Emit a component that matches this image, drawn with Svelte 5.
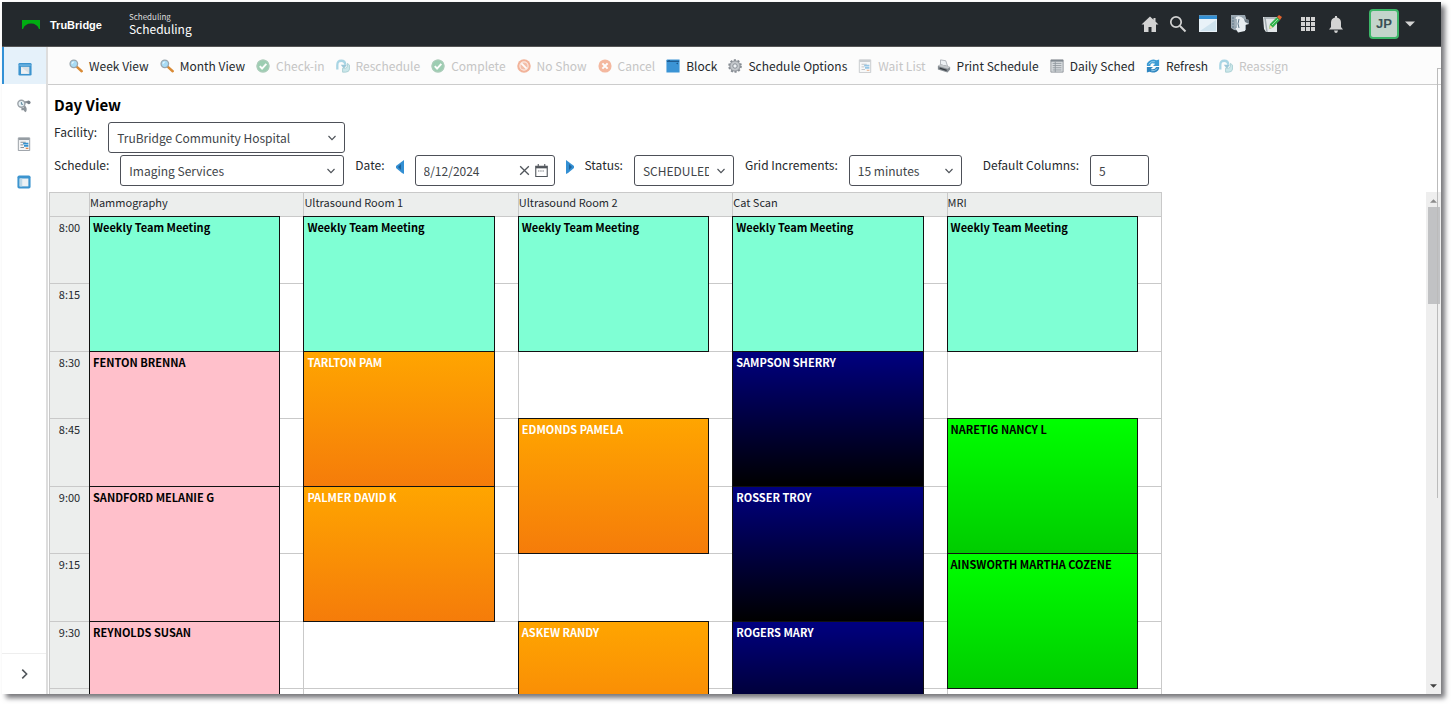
<script>
  const tools = [
    { label: "Week View", icon: "magnifier" },
    { label: "Month View", icon: "magnifier" },
    { label: "Check-in", icon: "check", disabled: true },
    { label: "Reschedule", icon: "redo", disabled: true },
    { label: "Complete", icon: "check", disabled: true },
    { label: "No Show", icon: "forbid", disabled: true },
    { label: "Cancel", icon: "cancel", disabled: true },
    { label: "Block", icon: "book" },
    { label: "Schedule Options", icon: "gear" },
    { label: "Wait List", icon: "form", disabled: true },
    { label: "Print Schedule", icon: "printer" },
    { label: "Daily Sched", icon: "list" },
    { label: "Refresh", icon: "refresh" },
    { label: "Reassign", icon: "redo", disabled: true },
  ];

  const sideItems = [
    { label: "Schedule", icon: "window" },
    { label: "Worklist", icon: "scope" },
    { label: "Reports", icon: "form" },
    { label: "Calendar", icon: "panel" },
  ];

  const slots = ["8:00", "8:15", "8:30", "8:45", "9:00", "9:15", "9:30", ""];
  // average height of a 15 minute row, rows alternate 67 / 68
  const slotHeight = 67.5;

  const meeting = { name: "Weekly Team Meeting", start: "8:00", span: 2, kind: "meeting" };

  const rooms = [
    {
      name: "Mammography",
      events: [
        meeting,
        { name: "FENTON BRENNA", start: "8:30", span: 2, kind: "pink" },
        { name: "SANDFORD MELANIE G", start: "9:00", span: 2, kind: "pink" },
        { name: "REYNOLDS SUSAN", start: "9:30", span: 2, kind: "pink" },
      ],
    },
    {
      name: "Ultrasound Room 1",
      events: [
        meeting,
        { name: "TARLTON PAM", start: "8:30", span: 2, kind: "orange" },
        { name: "PALMER DAVID K", start: "9:00", span: 2, kind: "orange" },
      ],
    },
    {
      name: "Ultrasound Room 2",
      events: [
        meeting,
        { name: "EDMONDS PAMELA", start: "8:45", span: 2, kind: "orange" },
        { name: "ASKEW RANDY", start: "9:30", span: 2, kind: "orange" },
      ],
    },
    {
      name: "Cat Scan",
      events: [
        meeting,
        { name: "SAMPSON SHERRY", start: "8:30", span: 2, kind: "navy" },
        { name: "ROSSER TROY", start: "9:00", span: 2, kind: "navy" },
        { name: "ROGERS MARY", start: "9:30", span: 2, kind: "navy" },
      ],
    },
    {
      name: "MRI",
      events: [
        meeting,
        { name: "NARETIG NANCY L", start: "8:45", span: 2, kind: "green" },
        { name: "AINSWORTH MARTHA COZENE", start: "9:15", span: 2, kind: "green" },
      ],
    },
  ];

  let date = $state("8/12/2024");
  let columns = $state("5");
</script>

{#snippet icon(name)}
  <svg class="icon" viewBox="0 0 16 16" aria-hidden="true">
    {#if name === "magnifier"}
      <path d="M9 9l5.500 5" stroke="#d98a35" stroke-width="2.800" stroke-linecap="round" />
      <circle cx="5.500" cy="5.500" r="4.300" fill="#a9dcf5" stroke="#9aa6ae" stroke-width="1.500" />
      <path d="M3.500 5.500a2 2 0 0 1 2-2" stroke="#fff" fill="none" />
    {:else if name === "check"}
      <circle cx="8" cy="8" r="7.500" fill="#41a06b" />
      <circle cx="8" cy="8" r="6.900" fill="none" stroke="#6d9a80" />
      <path d="M4.300 8.200l2.600 2.700 4.900-5.400" fill="none" stroke="#fff" stroke-width="2.200" />
    {:else if name === "redo"}
      <path d="M1.500 12V7Q1.500 2 6 2t4.500 4.500" fill="none" stroke="#58b0cd" stroke-width="2.600" />
      <path d="M5.500 6.500h7L9 11z" fill="#3c93b5" />
      <path d="M13 5l2.500 2v4.500Q15 15 11 15H7.500v-4.500H11Q13 10 13 8z" fill="#9bd3da" stroke="#55a1a9" />
    {:else if name === "forbid"}
      <circle cx="8" cy="8" r="7.700" fill="#ea6c3a" />
      <circle cx="8" cy="8" r="4.700" fill="#ee8259" stroke="#fbd9cb" stroke-width="1.300" />
      <path d="M5 5l6 6" stroke="#fff" stroke-width="2" />
    {:else if name === "cancel"}
      <circle cx="8" cy="8" r="7.500" fill="#ee7645" />
      <path d="M5 5l6 6M11 5l-6 6" stroke="#fff" stroke-width="2.400" />
    {:else if name === "book"}
      <path d="M.5 1.500Q.5.500 1.500.500h14v15H.500z" fill="#3b94d5" />
      <path d="M1 2.500h14M3.500 1v2" stroke="#174b7c" stroke-width="1.200" />
      <path d="M11.500 5.500l2-1.500v2z" fill="#174b7c" />
    {:else if name === "gear"}
      <circle cx="8" cy="8" r="6.600" fill="#b9bdc2" stroke="#858b92" stroke-width="2.400" stroke-dasharray="2.300 1.850" />
      <circle cx="8" cy="8" r="5.700" fill="#c3c7cb" stroke="#92979d" />
      <circle cx="8" cy="8" r="2.500" fill="#eef1f4" stroke="#7e858d" />
    {:else if name === "form"}
      <path d="M1.500 1h13v14.500h-13z" fill="#f4f5f6" stroke="#8e959b" />
      <path d="M2 1h12v2.500H2z" fill="#969da3" />
      <path d="M4 6h6M4 9h3M4 12h4" stroke="#79828a" />
      <path d="M7 7.500h6M8 10h5" stroke="#3391cf" stroke-width="2" />
      <path d="M10 13h3" stroke="#e2854a" stroke-width="1.500" />
    {:else if name === "printer"}
      <path d="M4 7L4 1l6 1 2 6z" fill="#edf1f4" stroke="#a8adb3" />
      <path d="M1 8l3-2 11 3v3l-3 3.500L1 12z" fill="#858c92" />
      <path d="M1 8l3-2 11 3-3 2z" fill="#c4c8cb" />
      <path d="M3 10.500l8 2.500" stroke="#34393e" stroke-width="1.600" />
    {:else if name === "list"}
      <path d="M1 1h14v14H1z" fill="#d8dcdf" stroke="#8b9197" />
      <path d="M1 2h14" stroke="#818991" stroke-width="2" />
      <path d="M3 5h10M3 7.500h10M3 10h10M3 12.500h10M6 3v12" stroke="#90979e" />
    {:else if name === "refresh"}
      <path d="M1 8V5Q4 .5 9 .5l3 1 3-1V8H8l2.500-2.500Q5 3.500 5 8z" fill="#3c9bd4" />
      <path d="M15 9v2q-2 4.500-8 4.500l-3-1-3 1V9h7l-2.500 2.500q5 1 6-2.500z" fill="#2f86c0" />
      <path d="M3 6Q6 2 10 3M13 11q-3 3-7 2.500" fill="none" stroke="#a2d5ef" />
    {:else if name === "window"}
      <rect x=".5" y="1" width="15" height="14.500" rx="1.500" fill="#3c94cf" />
      <path d="M1.500 3.500h13" stroke="#91cbed" />
      <path d="M3.500 5.500h9.500v8H3.500z" fill="#d9e0e5" />
      <path d="M3.500 5.500l9.500 8h-9.500z" fill="#eef1f3" />
    {:else if name === "scope"}
      <path d="M8 4l6-1M8 8q3 3 1 6.500M5 11.500h4" fill="none" stroke="#8d949a" stroke-width="2.600" />
      <circle cx="5" cy="5.500" r="4" fill="#e8f1f5" stroke="#9ba2a8" stroke-width="1.600" />
      <path d="M5 3.500V6h2" fill="none" stroke="#4c7990" />
      <circle cx="13.500" cy="4" r="2" fill="#777f87" />
    {:else if name === "panel"}
      <rect x=".5" y=".5" width="15" height="15" rx="2" fill="#3c94cf" />
      <path d="M3 4h10v9H3z" fill="#edf1f4" />
      <path d="M3 4h3v9H3z" fill="#bdd8e8" />
    {/if}
  </svg>
{/snippet}

{#snippet chevron()}
  <svg class="chevron" viewBox="0 0 8 8" aria-hidden="true">
    <path d="M.5 2L4 5.700 7.500 2" fill="none" stroke="#4c5157" stroke-width="1.100" />
  </svg>
{/snippet}

<div class="app">
  <header>
    <svg class="logo" viewBox="0 0 18 9" aria-hidden="true">
      <path d="M0 0h18v9h-1Q15 3.500 9 3.500T1 9H0z" fill="#00ad12" />
    </svg>
    <strong class="brand">TruBridge</strong>
    <div class="crumbs">
      <small>Scheduling</small>
      <span>Scheduling</span>
    </div>
    <nav>
      <button aria-label="Home">
        <svg viewBox="0 0 18 18"><path d="M9 1.500L.5 9.500H3V17h4.500v-5h3v5H15V9.500h2.500L14.500 6.500V3h-2v1.700z" fill="#d3d3d3" /></svg>
      </button>
      <button aria-label="Search">
        <svg viewBox="0 0 18 18" fill="none" stroke="#d3d3d3"><circle cx="7" cy="7" r="5.200" stroke-width="1.700" /><path d="M11 11l5.500 5.500" stroke-width="2" /></svg>
      </button>
      <button class="wide" aria-label="Window">
        <svg viewBox="0 0 20 18"><path d="M1 .5h18v16.500H1z" fill="#e9f2f8" /><path d="M1 .5h18V4H1z" fill="#3490d4" /><path d="M2 16L18 5v11z" fill="#cfe3ee" /></svg>
      </button>
      <button class="wide" aria-label="Scanner">
        <svg viewBox="0 0 20 18"><path d="M1 0h14l1 3v12l-4 1-8-1-3-2z" fill="#9aa7b1" /><path d="M6 2q4-2 8 2l5 1v4l-4 1v6l-7 1.500Q3 11 6 2z" fill="#e7edf1" /><path d="M6 4v9M9 4q-2 5 0 9M2 3h2M2 6h2M2 9h2M2 12h2" fill="none" stroke="#5f7889" /><path d="M14 4l5 1v4l-4-2z" fill="#6d7a84" /></svg>
      </button>
      <button class="wide" aria-label="Notes">
        <svg viewBox="0 0 20 18"><path d="M1 2h14v15H4L2 14z" fill="#e3e7e9" /><path d="M3 3l2 14M2 3h12" stroke="#a0a9ae" stroke-width="1.500" /><path d="M7 14l1-5 7-7 3 3-7 7.500z" fill="#32b24c" /><path d="M15 2l2-2 3 2-2 3z" fill="#e3632d" /><path d="M7 14l1-4 3 2.500z" fill="#ecd7a4" /><path d="M10 10l6-6" stroke="#9ae2a5" /></svg>
      </button>
      <button class="apps" aria-label="Applications">
        <svg viewBox="0 0 18 18" fill="#d3d3d3">
          {#each [2, 7, 12] as y}
            {#each [2, 7, 12] as x}
              <rect {x} {y} width="4" height="4" />
            {/each}
          {/each}
        </svg>
      </button>
      <button aria-label="Notifications">
        <svg viewBox="0 0 18 18" fill="#d3d3d3"><path d="M8 1h2v1.500q4 1 4 5V12l2 2.500H2L4 12V7.500q0-4 4-5zM7 15.500h4Q10.500 18 9 18t-2-2.500z" /></svg>
      </button>
      <button class="avatar">JP</button>
      <button class="caret" aria-label="Account menu">
        <svg viewBox="0 0 10 6"><path d="M0 .5h10L5 5.500z" fill="#d3d3d3" /></svg>
      </button>
    </nav>
  </header>

  <div class="body">
    <aside>
      {#each sideItems as item, i}
        <button class:active={i === 0} aria-label={item.label}>{@render icon(item.icon)}</button>
      {/each}
      <button class="expand" aria-label="Expand">
        <svg class="icon" viewBox="0 0 16 16"><path d="M6 3l5 5-5 5" fill="none" stroke="#50555a" stroke-width="1.800" /></svg>
      </button>
    </aside>

    <main>
      <div class="toolbar">
        {#each tools as tool}
          <button disabled={tool.disabled}>
            {@render icon(tool.icon)}
            {tool.label}
          </button>
        {/each}
      </div>

      <h1>Day View</h1>

      <form>
        <div class="row">
          <label for="facility">Facility:</label>
          <div class="field facility">
            <select id="facility"><option>TruBridge Community Hospital</option></select>
            {@render chevron()}
          </div>
        </div>
        <div class="row">
          <label for="schedule">Schedule:</label>
          <div class="field schedule">
            <select id="schedule"><option>Imaging Services</option></select>
            {@render chevron()}
          </div>
          <label for="date">Date:</label>
          <button type="button" class="step" aria-label="Previous day">
            <svg viewBox="0 0 8 14"><path d="M8 0v14L6 13 0 8V6z" fill="#338fd3" /><path d="M5 4v6L2 7z" fill="#1f6299" /></svg>
          </button>
          <div class="field date">
            <input id="date" type="text" bind:value={date} />
            <button type="button" aria-label="Clear date" onclick={() => (date = "")}>
              <svg viewBox="0 0 12 12"><path d="M2 2l8 8M10 2l-8 8" stroke="#50555b" stroke-width="1.200" /></svg>
            </button>
            <button type="button" aria-label="Pick date">
              <svg viewBox="0 0 12 12" fill="none" stroke="#50555b"><path d="M.7 2h10.600v9.500H.7zM3 0v2M9 0v2" /><path d="M.7 3h10.600" stroke-width="2" /><path d="M3 6.500h6" stroke-dasharray="1 1" /></svg>
            </button>
          </div>
          <button type="button" class="step" aria-label="Next day">
            <svg viewBox="0 0 8 14"><path d="M0 0v14l2-1 6-5V6z" fill="#338fd3" /><path d="M3 4v6l3-3z" fill="#1f6299" /></svg>
          </button>
          <label for="status">Status:</label>
          <div class="field status">
            <select id="status"><option>SCHEDULED</option></select>
            {@render chevron()}
          </div>
          <label for="increments">Grid Increments:</label>
          <div class="field increments">
            <select id="increments"><option>15 minutes</option></select>
            {@render chevron()}
          </div>
          <label class="apart" for="columns">Default Columns:</label>
          <div class="field columns">
            <input id="columns" type="text" bind:value={columns} />
          </div>
        </div>
      </form>

      <div class="calendar">
        <div class="grid">
          <table>
            <thead>
              <tr>
                <th class="time"></th>
                {#each rooms as room}
                  <th>{room.name}</th>
                {/each}
              </tr>
            </thead>
            <tbody>
              {#each slots as slot}
                <tr>
                  <th class="time">{slot}</th>
                  {#each rooms as room}
                    <td>
                      {#each room.events.filter((e) => e.start === slot) as event}
                        <div class="event {event.kind}" style:height="{event.span * slotHeight + 1}px">
                          {event.name}
                        </div>
                      {/each}
                    </td>
                  {/each}
                </tr>
              {/each}
            </tbody>
          </table>
        </div>
        <div class="scrollbar">
          <svg viewBox="0 0 8 4"><path d="M0 4h8L4 0z" fill="#8b8b8b" /></svg>
          <div class="thumb"></div>
          <svg class="down" viewBox="0 0 8 4"><path d="M0 0h8L4 4z" fill="#404040" /></svg>
        </div>
      </div>
    </main>
  </div>
  <div class="edge"></div>
</div>

<style>
  :global(body) {
    background: #fff;
    overflow: hidden;
  }

  .app {
    position: relative;
    display: flex;
    flex-direction: column;
    box-sizing: border-box;
    height: calc(100vh - 12px);
    margin: 2px 10px 10px 2px;
    background: #fff;
    box-shadow: 4px 4px 5px 0 #77777b;
    font: 12px/20px "Noto Sans CJK SC", "Noto Sans", sans-serif;
    color: #25292d;
  }

  button,
  input,
  select {
    font: inherit;
    color: inherit;
  }

  button {
    display: flex;
    align-items: center;
    justify-content: center;
    padding: 0;
    border: 0;
    background: none;
  }

  .icon {
    width: 14px;
    height: 14px;
    fill: none;
  }

  header {
    display: flex;
    flex: none;
    align-items: center;
    height: 45px;
    padding: 0 26px 0 20px;
    background: #24292d;
    border-bottom: 1px solid #555;
    box-sizing: border-box;
    color: #fff;
  }

  .logo {
    width: 18px;
    height: 9px;
  }

  .brand {
    margin: 2px 27px 0 10px;
    font: bold 11px/16px "Liberation Sans", Arial, sans-serif;
  }

  .crumbs {
    display: flex;
    flex-direction: column;
  }

  .crumbs small {
    font-size: 8px;
    line-height: 10px;
    color: #ddd;
  }

  .crumbs span {
    line-height: 14px;
  }

  nav {
    display: flex;
    align-items: center;
    gap: 10px;
    margin-left: auto;
  }

  nav svg {
    width: 18px;
    height: 18px;
  }

  nav .wide {
    margin: 0 1px;
  }

  nav .wide svg {
    width: 20px;
  }

  nav .apps {
    margin-left: 6px;
  }

  nav .avatar {
    width: 30px;
    height: 30px;
    margin-left: 14px;
    border: 2px solid #3cb768;
    border-radius: 4px;
    background: #c3d5cb;
    color: #3b5156;
    font: bold 13px/20px "Liberation Sans", Arial, sans-serif;
  }

  nav .caret {
    margin-left: -4px;
  }

  nav .caret svg {
    width: 10px;
    height: 6px;
  }

  .body {
    display: flex;
    flex: 1;
    min-height: 0;
  }

  aside {
    display: flex;
    flex: none;
    flex-direction: column;
    width: 44px;
    border-right: 2px solid #ddd;
  }

  aside button {
    height: 38px;
  }

  aside .active {
    height: 37px;
    margin-bottom: 3px;
    border-left: 2px solid #3291d6;
    background: #e5f1fa;
  }

  aside .active .icon {
    margin-top: 6px;
  }

  aside .expand {
    height: 41px;
    margin-top: auto;
    border-top: 1px solid #eee;
  }

  main {
    display: flex;
    flex: 1;
    flex-direction: column;
    min-width: 0;
  }

  .toolbar {
    display: flex;
    flex: none;
    gap: 11px;
    height: 37px;
    padding-left: 21px;
    border-bottom: 1px solid #ccc;
    background: #fcfcfc;
  }

  .toolbar button {
    gap: 6px;
    white-space: nowrap;
  }

  .toolbar button:disabled {
    color: #c5c5c5;
  }

  .toolbar button:disabled .icon {
    opacity: 0.5;
  }

  h1 {
    margin: 10px 0 7px 6px;
    color: #000;
    font-size: 15px;
    line-height: 20px;
  }

  form {
    display: flex;
    flex-direction: column;
    gap: 2px;
    padding: 0 0 6px 6px;
  }

  .row {
    display: flex;
    align-items: flex-start;
    gap: 11px;
  }

  label {
    white-space: nowrap;
  }

  .apart {
    margin-left: 10px;
  }

  .field {
    position: relative;
    display: flex;
    align-items: center;
    box-sizing: border-box;
    height: 31px;
    border: 1px solid #4d5058;
    border-radius: 3px;
    background: #fff;
    color: #414549;
  }

  .field select,
  .field input {
    flex: 1;
    min-width: 0;
    height: 100%;
    padding: 0 24px 0 8px;
    border: 0;
    background: none;
    appearance: none;
    outline: 0;
  }

  .field input {
    padding-right: 4px;
  }

  .chevron {
    position: absolute;
    right: 8px;
    width: 8px;
    height: 8px;
    pointer-events: none;
  }

  .facility {
    width: 237px;
  }

  .schedule {
    width: 224px;
  }

  .date {
    gap: 4px;
    width: 140px;
    padding-right: 6px;
  }

  .date svg {
    width: 13px;
    height: 13px;
  }

  .status {
    width: 100px;
  }

  .increments {
    width: 113px;
  }

  .columns {
    width: 59px;
  }

  .step {
    height: 24px;
  }

  .step svg {
    width: 8px;
    height: 14px;
  }

  .calendar {
    display: flex;
    flex: 1;
    min-height: 0;
    overflow: hidden;
  }

  .grid {
    flex: 1;
    padding: 0 264px 0 1px;
  }

  table {
    width: 100%;
    table-layout: fixed;
    border-collapse: collapse;
    font-size: 11px;
  }

  th,
  td {
    box-sizing: border-box;
    padding: 0;
    border: 1px solid #c9c9c9;
    vertical-align: top;
  }

  th {
    background: #eceeed;
    font-weight: normal;
    line-height: 20px;
    text-align: left;
  }

  thead th {
    line-height: 19px;
  }

  .time {
    width: 40px;
    text-align: center;
  }

  thead tr {
    height: 24px;
  }

  tbody tr {
    height: 67px;
  }

  tbody tr:nth-child(even) {
    height: 68px;
  }

  td {
    position: relative;
  }

  .event {
    position: absolute;
    z-index: 1;
    top: -1px;
    left: -1px;
    right: 23px;
    box-sizing: border-box;
    padding-left: 3px;
    overflow: hidden;
    border: 1px solid #111;
    color: #000;
    font-weight: bold;
    line-height: 21px;
    white-space: nowrap;
  }

  .meeting {
    background: #7fffd4;
  }

  .pink {
    background: #ffc0cb;
  }

  .orange {
    background: linear-gradient(#ffa500, #f57c0a);
    color: #fff;
  }

  .navy {
    background: linear-gradient(#000080, #000);
    color: #fff;
  }

  .green {
    background: linear-gradient(#0f0, #0c0);
  }

  .scrollbar {
    display: flex;
    flex: none;
    flex-direction: column;
    align-items: center;
    width: 15px;
    padding: 7px 0 6px;
    box-sizing: border-box;
    background: #eee;
  }

  .scrollbar svg {
    flex: none;
    width: 7px;
    height: 4px;
  }

  .thumb {
    width: 12px;
    height: 97px;
    margin-top: 4px;
    background: #c1c2c4;
  }

  .scrollbar .down {
    margin-top: auto;
  }

  /* collapsed drawer peeking in over the right side */
  .edge {
    position: absolute;
    top: 66px;
    right: 0;
    bottom: 196px;
    width: 3px;
    border: 1px solid #bbb;
    border-width: 1px 0 0 1px;
    pointer-events: none;
  }
</style>
